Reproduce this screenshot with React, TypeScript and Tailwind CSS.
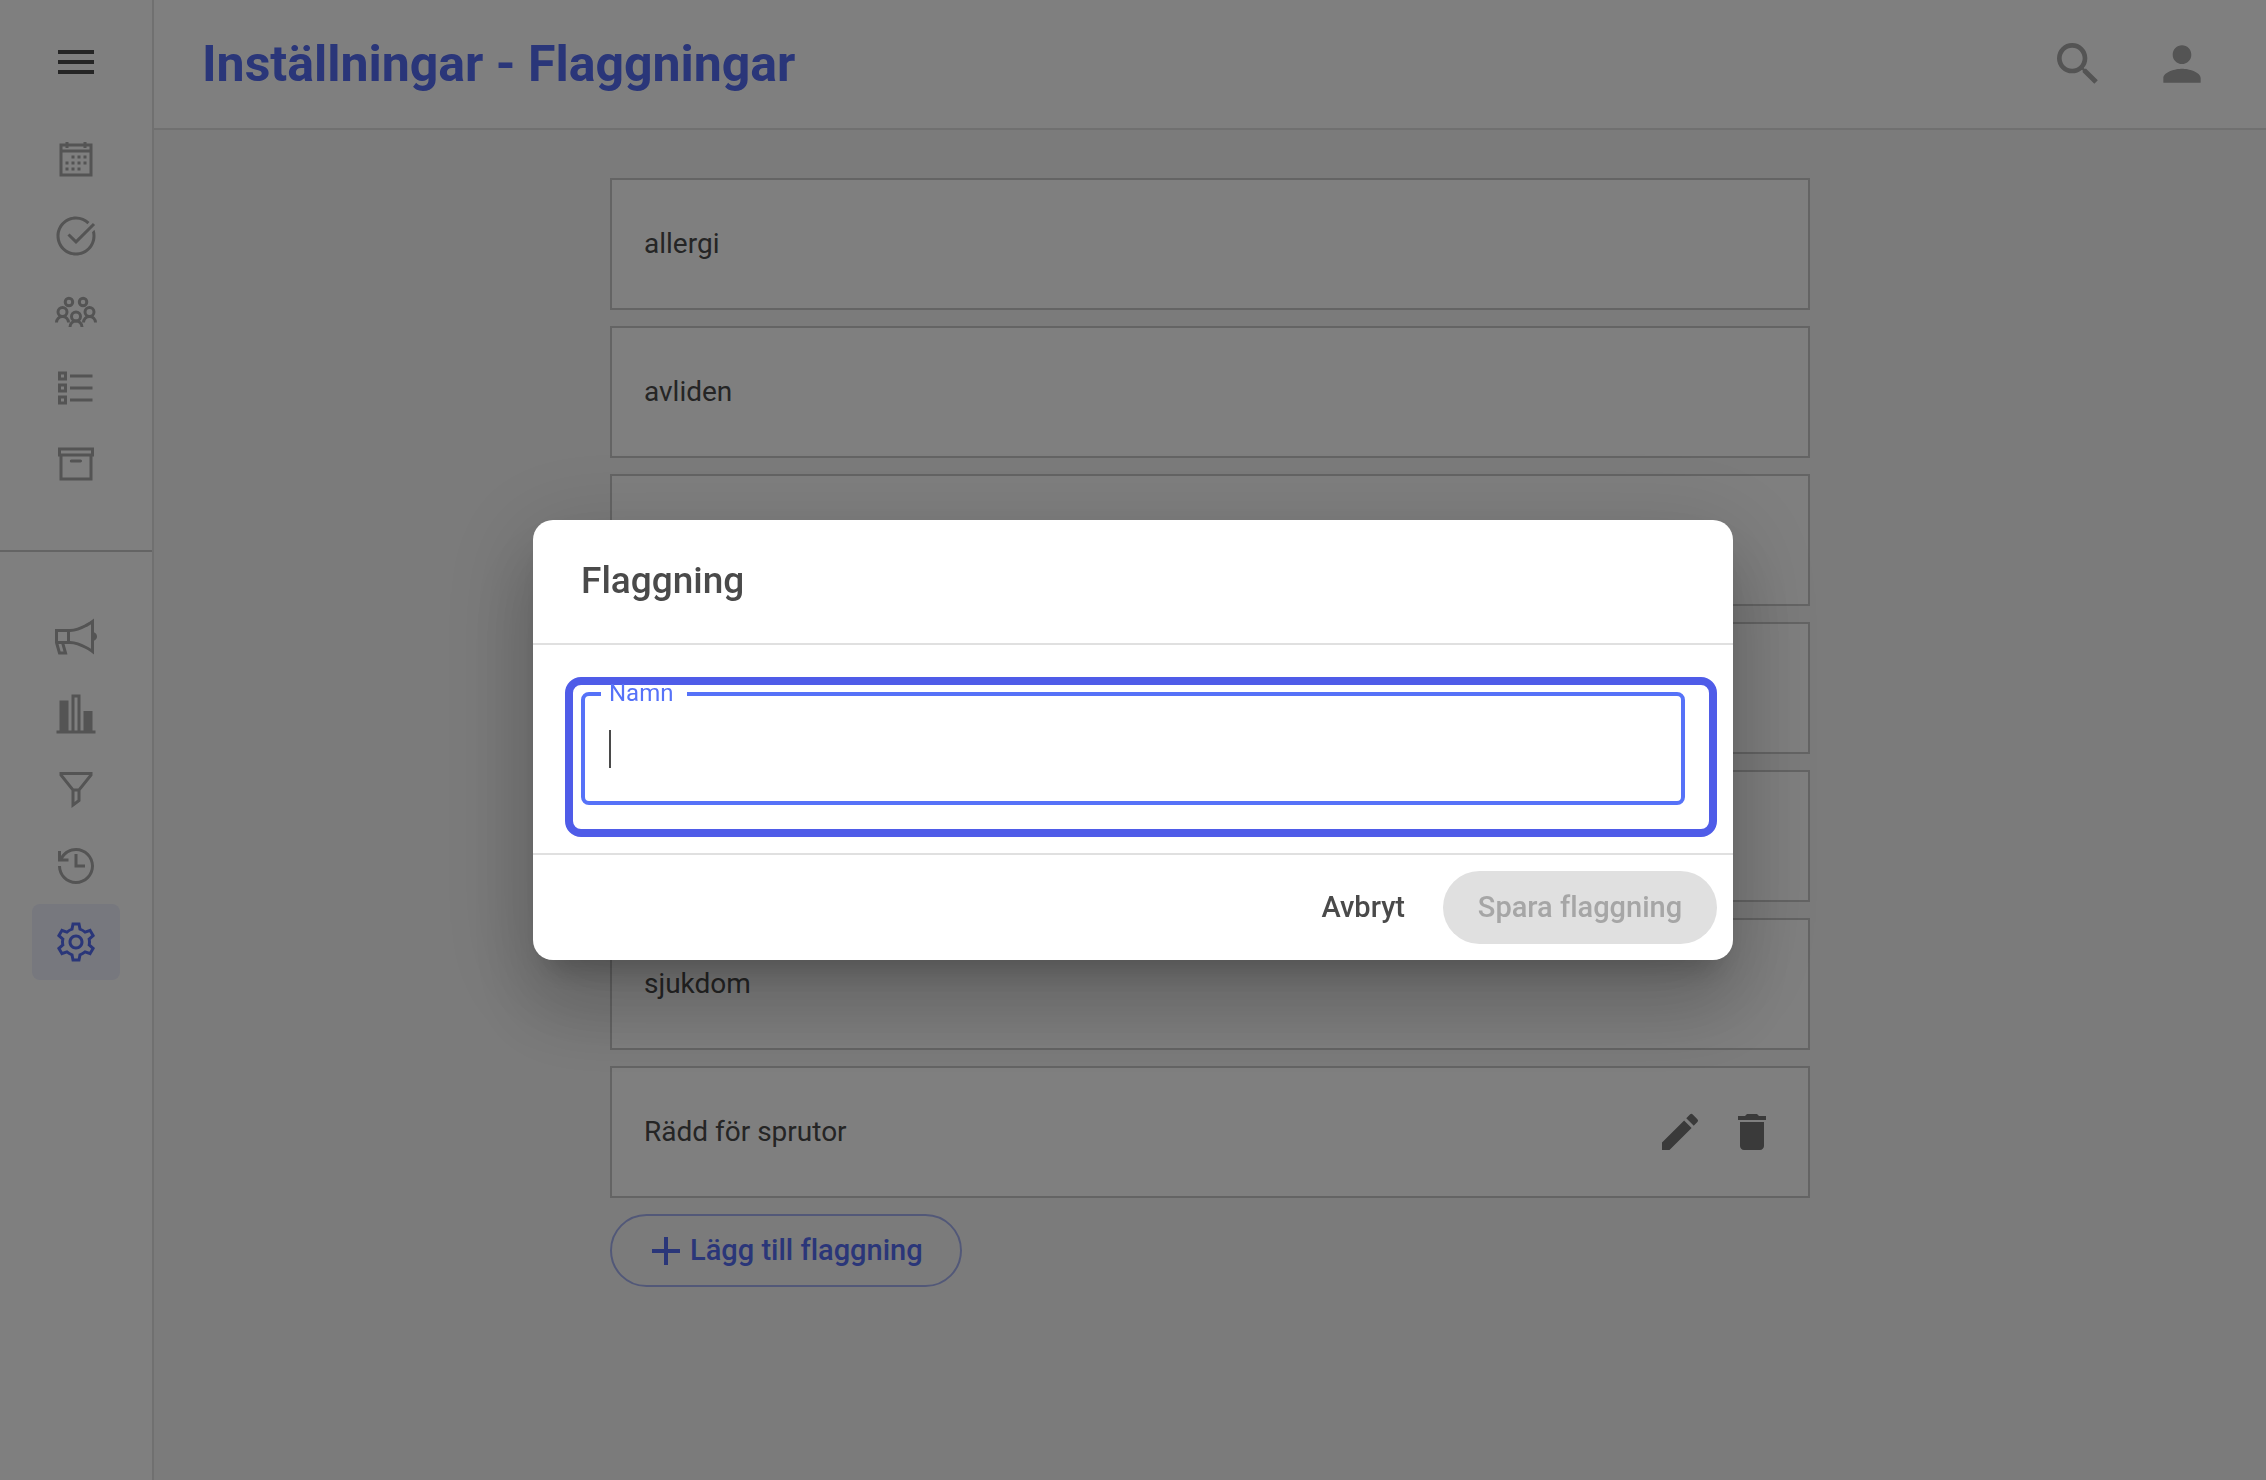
import { useState } from "react";
import {
  LiaArchiveSolid,
  LiaBullhornSolid,
  LiaCalendar,
  LiaCheckCircle,
  LiaCogSolid,
  LiaFilterSolid,
  LiaHistorySolid,
} from "react-icons/lia";
import { MdAdd, MdDelete, MdEdit, MdMenu, MdPerson, MdSearch } from "react-icons/md";

type IconProps = { className?: string };

function PeopleIcon({ className }: IconProps) {
  return (
    <svg viewBox="0 0 32 32" fill="none" stroke="currentColor" strokeWidth="2" className={className}>
      <circle cx="11.3" cy="9.3" r="2.5" />
      <circle cx="20.7" cy="9.3" r="2.5" />
      <circle cx="7" cy="16" r="3" />
      <circle cx="25" cy="16" r="3" />
      <circle cx="16" cy="19" r="3" />
      <path d="M3 23a4 4 0 0 1 8 0M21 23a4 4 0 0 1 8 0M12 26a4 4 0 0 1 8 0" />
    </svg>
  );
}

function ListIcon({ className }: IconProps) {
  return (
    <svg viewBox="0 0 32 32" fill="none" stroke="currentColor" strokeWidth="2" className={className}>
      <path d="M5 6h4v4H5zM5 14h4v4H5zM5 22h4v4H5zM12 8h15M12 16h15M12 24h15" />
    </svg>
  );
}

function BarsIcon({ className }: IconProps) {
  return (
    <svg viewBox="0 0 32 32" fill="currentColor" className={className}>
      <path d="M13 3h6v24h2V14h6v13h2v2H3v-2h2V7h6v20h2zM15 5v22h2V5z" fillRule="evenodd" />
    </svg>
  );
}

const mainNav = [
  { label: "Kalender", Icon: LiaCalendar },
  { label: "Uppgifter", Icon: LiaCheckCircle },
  { label: "Patienter", Icon: PeopleIcon },
  { label: "Listor", Icon: ListIcon },
  { label: "Arkiv", Icon: LiaArchiveSolid },
];

const adminNav = [
  { label: "Utskick", Icon: LiaBullhornSolid },
  { label: "Statistik", Icon: BarsIcon },
  { label: "Filter", Icon: LiaFilterSolid },
  { label: "Historik", Icon: LiaHistorySolid },
  { label: "Inställningar", Icon: LiaCogSolid, active: true },
];

const flags = [
  { id: 1, name: "allergi" },
  { id: 2, name: "avliden" },
  { id: 3, name: "" },
  { id: 4, name: "" },
  { id: 5, name: "" },
  { id: 6, name: "sjukdom" },
  { id: 7, name: "Rädd för sprutor", editable: true },
];

function NavGroup({ items }: { items: { label: string; Icon: React.ElementType; active?: boolean }[] }) {
  return (
    <div className="flex flex-col items-center">
      {items.map(({ label, Icon, active }) => (
        <a
          key={label}
          href="#"
          aria-label={label}
          className={`flex h-[76px] w-[88px] items-center justify-center rounded-lg ${
            active ? "bg-[#eef0fd] text-[#546cf2]" : "text-[#a8a8a8]"
          }`}
        >
          <Icon className="size-12" />
        </a>
      ))}
    </div>
  );
}

function FlagDialog() {
  const [name, setName] = useState("");

  return (
    <div className="fixed inset-0 flex items-center justify-center bg-black/50">
      <form
        role="dialog"
        aria-labelledby="dialog-title"
        className="w-full max-w-[1200px] rounded-[20px] bg-white shadow-[0_22px_30px_-14px_rgba(0,0,0,0.2),0_48px_76px_6px_rgba(0,0,0,0.14),0_18px_92px_16px_rgba(0,0,0,0.12)]"
      >
        <h2
          id="dialog-title"
          className="border-b-2 border-[#e0e0e0] px-12 pt-[37px] pb-[38px] text-[37px] leading-12 font-medium text-[#4a4a4a]"
        >
          Flaggning
        </h2>
        <div className="pt-8 pr-4 pb-4 pl-8">
          <div className="rounded-2xl border-8 border-[#4f5ce8] pt-[7px] pr-6 pb-6 pl-2">
            <div className="relative flex h-[113px] items-center rounded-lg border-4 border-[#5672f8] px-6">
              <label
                htmlFor="flag-name"
                className="absolute -top-[11px] left-4 bg-white pr-3.5 pl-2 text-2xl leading-4 text-[#5672f8]"
              >
                Namn
              </label>
              {/* text cursor */}
              <span className="h-[38px] w-0.5 bg-[#4a4a4a]" />
              <input
                id="flag-name"
                value={name}
                onChange={(e) => setName(e.target.value)}
                className="h-12 flex-1 text-[28px] text-[#4a4a4a] caret-transparent outline-none"
              />
            </div>
          </div>
        </div>
        <div className="flex justify-end gap-1.5 border-t-2 border-[#e0e0e0] p-4 text-[29px] font-medium">
          <button type="button" className="h-[73px] rounded-full px-8 text-[#4a4a4a]">
            Avbryt
          </button>
          <button
            type="submit"
            disabled={!name}
            className="h-[73px] min-w-[274px] rounded-full bg-[#e0e0e0] px-8 text-[#a6a6a6]"
          >
            Spara flaggning
          </button>
        </div>
      </form>
    </div>
  );
}

export default function App() {
  return (
    <div className="flex min-h-screen bg-[#f7f7f7] font-['Roboto',sans-serif] text-[#4a4a4a] [font-variant-ligatures:none]">
      <nav className="w-[154px] shrink-0 border-r-2 border-[#e0e0e0] bg-white">
        <button type="button" aria-label="Meny" className="mx-auto mt-[38px] mb-9 block">
          <MdMenu className="size-12" />
        </button>
        <NavGroup items={mainNav} />
        <hr className="my-12 border-t-2 border-[#c8c8c8]" />
        <NavGroup items={adminNav} />
      </nav>

      <div className="flex-1">
        <header className="flex h-[130px] items-center justify-between border-b-2 border-[#e0e0e0] bg-white pr-14 pl-12">
          <h1 className="text-[50px] font-bold text-[#546cf2]">Inställningar - Flaggningar</h1>
          <div className="flex gap-12 text-[#a8a8a8]">
            <button type="button" aria-label="Sök">
              <MdSearch className="size-14" />
            </button>
            <button type="button" aria-label="Konto">
              <MdPerson className="size-14" />
            </button>
          </div>
        </header>

        <main className="mx-auto max-w-[1200px] py-12">
          <ul className="space-y-4">
            {flags.map((flag) => (
              <li
                key={flag.id}
                className="flex h-[132px] items-center justify-between border-2 border-[#c8c8c8] bg-white px-8 text-[28px]"
              >
                {flag.name}
                {flag.editable && (
                  <div className="flex gap-6 text-[#757575]">
                    <button type="button" aria-label="Redigera">
                      <MdEdit className="size-12" />
                    </button>
                    <button type="button" aria-label="Ta bort">
                      <MdDelete className="size-12" />
                    </button>
                  </div>
                )}
              </li>
            ))}
          </ul>
          <button
            type="button"
            className="mt-4 flex h-[73px] min-w-[352px] items-center rounded-full border-2 border-[#a5b1f0] px-[30px] text-[29px] font-medium text-[#546cf2]"
          >
            <MdAdd className="size-12" />
            Lägg till flaggning
          </button>
        </main>
      </div>

      <FlagDialog />
    </div>
  );
}
